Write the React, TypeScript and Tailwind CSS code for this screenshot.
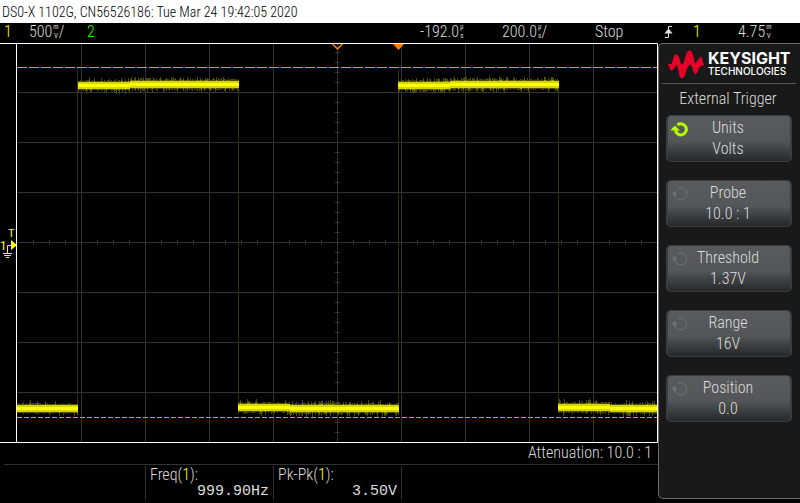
import React from "react";

type SoftKey = {
  label: string;
  value: string;
  active?: boolean;
};

type Segment = {
  x1: number;
  x2: number;
  y: number;
  settle: number;
};

const softKeys: SoftKey[] = [
  { label: "Units", value: "Volts", active: true },
  { label: "Probe", value: "10.0 : 1" },
  { label: "Threshold", value: "1.37V" },
  { label: "Range", value: "16V" },
  { label: "Position", value: "0.0" },
];

const measurements = [
  { name: "Freq", channel: 1, value: "999.90Hz" },
  { name: "Pk-Pk", channel: 1, value: "3.50V" },
];

const columns = [81, 145, 209, 273, 337, 401, 465, 529, 593];
const rows = [49, 99, 149, 199, 249, 299, 349];
const edges = [
  { x: 77, top: 25 },
  { x: 238, top: 44 },
  { x: 398, top: 27 },
  { x: 558, top: 44 },
];

// settle is how far the level drifts from its start to its end
const segments: Segment[] = [
  { x1: 17, x2: 78, y: 365, settle: 0 },
  { x1: 78, x2: 239, y: 41, settle: 1.4 },
  { x1: 238, x2: 399, y: 365, settle: -1.4 },
  { x1: 398, x2: 559, y: 41, settle: 1.4 },
  { x1: 558, x2: 657, y: 365, settle: -1.4 },
];

const noise = (x: number) => {
  const n = Math.sin(x * 12.9898) * 43758.5453;
  return n - Math.floor(n);
};

const levelAt = (s: Segment, x: number) =>
  Math.round(s.y + s.settle * Math.max(0, 1 - (x - s.x1) / 80));

const noisePath = (s: Segment, base: number, spike: number) => {
  let d = "";
  for (let x = s.x1; x < s.x2; x++) {
    const y = levelAt(s, x);
    const up = base + Math.floor(noise(x) * noise(x + 7) * spike);
    const down = base + Math.floor(noise(x + 31) * noise(x + 3) * spike);
    d += `M${x + 0.5} ${y - up}V${y + down + 1}`;
  }
  return d;
};

const corePath = (s: Segment) => {
  let d = "";
  for (let x = s.x1; x < s.x2; x++) {
    d += `M${x + 0.5} ${levelAt(s, x) - 1}v3`;
  }
  return d;
};

const Unit = ({ top, bottom }: { top: string; bottom: string }) => (
  <span className="ml-px inline-flex flex-col items-center text-[7px] font-normal leading-[9px]">
    <span>{top}</span>
    <span>{bottom}</span>
  </span>
);

const EdgeIcon = () => (
  <svg width="9" height="12" viewBox="0 0 9 12" fill="none" stroke="#e0e0e0" aria-hidden="true">
    <path d="M1 11.5h3.5V.5H8" />
    <path d="M4.500 2.500L.5 7.500h8z" fill="#e0e0e0" stroke="none" />
  </svg>
);

const Logo = () => (
  <svg width="36" height="28" viewBox="0 0 36 28" fill="#e90029" className="shrink-0" aria-hidden="true">
    <path d="M0 14H3.500L6 6Q8.300 2 11 7L13 14Q14.500 16 16 12L18.500 3Q21.500-2.500 24.500 3L26.500 12Q27.500 15 28.500 12L30.500 9Q32.500 5 34.500 9L35 13L36 14V15.500H33.500Q31.500 16 30.500 19L29.500 22Q27.500 26 25.500 22L24 17Q22 12 20.500 16L18.500 20L17 25Q14 31 11.500 26L10 19Q8.500 13 7.500 16L5.500 19Q3 23 1.500 18Z" />
  </svg>
);

const KnobIcon = ({ active }: { active?: boolean }) =>
  active ? (
    <svg width="18" height="15" viewBox="0 0 18 15" fill="none" className="text-[#b4ff00]" aria-hidden="true">
      <path d="M6.500 3A5.500 5.500 0 1 1 5 10" stroke="currentColor" strokeWidth="3" />
      <path d="M4 3.500L9 8.500H6.500V11H3.500V8.500H0V7.500Z" fill="currentColor" />
    </svg>
  ) : (
    <svg width="18" height="15" viewBox="0 0 18 15" fill="none" className="text-[#717476]" aria-hidden="true">
      <path d="M7 1.500A6 6 0 1 1 4.500 10" stroke="currentColor" />
      <path d="M3.500 4L6.500 7.500H4.500V10H3V7.500H.5Z" fill="currentColor" />
    </svg>
  );

const Scope = () => (
  <svg viewBox="0 0 658 400" className="block h-auto w-full" role="img" aria-label="Channel 1 square wave">
    <g stroke="#333333">
      {columns.map((x) => (
        <path key={x} d={`M${x + 0.5} 1V399`} />
      ))}
      {rows.map((y) => (
        <path key={y} d={`M17 ${y + 0.5}H657`} />
      ))}
      {Array.from({ length: 39 }, (_, i) => (
        <path key={i} d={`M335 ${i * 10 + 9.5}h5`} />
      ))}
      {Array.from({ length: 39 }, (_, i) => (
        <path key={i} d={`M${i * 16 + 33.5} 197v5`} />
      ))}
    </g>

    <g stroke="#333300">
      {edges.map((edge) => (
        <path key={edge.x} d={`M${edge.x + 0.5} ${edge.top}V366`} />
      ))}
    </g>
    {segments.map((s) => (
      <g key={s.x1}>
        <path d={noisePath(s, 4, 5)} stroke="#4d4d00" />
        <path d={noisePath(s, 3, 2)} stroke="#999900" />
        <path d={noisePath(s, 3, 1)} stroke="#d5d500" />
        <path d={corePath(s)} stroke="#ffff00" />
      </g>
    ))}

    <path d="M17 24.5H657" stroke="#ff8c1a" strokeDasharray="10 2" />
    <path d="M17 374.5H657" stroke="#ff8c1a" strokeDasharray="5 2" />

    <path d="M0 .5H657.500V399.500H0M16.500 0V399" fill="none" stroke="#ffffff" />
    <path d="M332.500 1L337.500 6L342.500 1" fill="none" stroke="#ff8000" strokeWidth="1.5" />
    <path d="M393 1H404L398.500 7Z" fill="#ff8000" />

    <text x="8" y="194" fill="#ffff00" className="font-['Roboto'] text-[11px] font-normal">
      T
    </text>
    <text x="0" y="207" fill="#ffff00" className="font-['Roboto_Condensed'] text-[13px] font-normal">
      1
    </text>
    <path d="M11 197L17 202L11 207Z" fill="#ffff00" />
    <path d="M11 202.500H7.500V210M3 210.500H12M4 212.500H11M6 214.500H9" fill="none" stroke="#ffff00" />
  </svg>
);

const StatusBar = () => (
  <header className="flex h-5 items-center pb-0.5">
    <div className="flex min-w-0 flex-1 items-center">
      <span className="w-[29px] pl-1 text-[#ffff00]">1</span>
      <span className="flex w-[58px] items-center">
        500
        <Unit top="m" bottom="V" />/
      </span>
      <span className="flex-1 text-[#33ff00]">2</span>
      <span className="flex w-[82px] items-center">
        -192.0
        <Unit top="µ" bottom="s" />
      </span>
      <span className="flex w-[93px] items-center">
        200.0
        <Unit top="µ" bottom="s" />/
      </span>
      <span className="w-[63px]">Stop</span>
    </div>
    <div className="flex w-[142px] items-center pl-1.5">
      <EdgeIcon />
      <span className="w-[65px] pl-5 text-[#ffff00]">1</span>
      <span className="flex items-center">
        4.75
        <Unit top="m" bottom="V" />
      </span>
    </div>
  </header>
);

const SoftKeyButton = ({ label, value, active }: SoftKey) => (
  <button
    type="button"
    className="relative h-[47px] w-full rounded-[5px] border border-x-2 border-[#3a3e41] bg-linear-to-b from-[#585b5d] from-0% via-[#54575a] via-55% to-[#25292c] pb-0.5 pr-0.5 text-center leading-[21px]"
  >
    <span className="absolute left-[3px] top-1.5">
      <KnobIcon active={active} />
    </span>
    <span className="block">{label}</span>
    <span className="block">{value}</span>
  </button>
);

const Menu = () => (
  <aside className="mb-1 w-[142px] shrink-0 rounded-l-[5px] border border-r-0 border-[#6b6b6b] bg-[#191919] pl-[7px] pr-2">
    <div className="-mx-1 flex h-10 items-center gap-1 border-b border-[#555555] pl-1.5">
      <Logo />
      <div className="whitespace-nowrap font-['Inter',sans-serif] text-white">
        <div className="text-[16px] font-bold leading-[14px]">KEYSIGHT</div>
        <div className="text-[10px] font-medium leading-[12px]">TECHNOLOGIES</div>
      </div>
    </div>
    <h1 className="flex h-[31px] items-center justify-center pb-0.5 pr-0.5">External Trigger</h1>
    <div className="flex flex-col gap-[18px]">
      {softKeys.map((key) => (
        <SoftKeyButton key={key.label} {...key} />
      ))}
    </div>
  </aside>
);

const App = () => {
  return (
    <div className="bg-black font-['Roboto_Condensed','Roboto',sans-serif] text-[16px] font-light leading-5 text-[#dddddd]">
      <div className="h-[23px] whitespace-nowrap bg-white pl-0.5 text-[14px] leading-[24px] text-black">
        DS0-X 1102G, CN56526186: Tue Mar 24 19:42:05 2020
      </div>
      <StatusBar />
      <main className="flex">
        <div className="min-w-0 flex-1">
          <Scope />
          <div className="ml-1 h-[22px] border-b border-[#2e3234] pr-1.5 text-right">
            Attenuation: 10.0 : 1
          </div>
          <div className="flex h-[38px] pl-[145px] pt-px">
            {measurements.map((m) => (
              <div key={m.name} className="h-[34px] w-32 border-l border-[#2e3234] px-1">
                <div className="leading-[17px]">
                  {m.name}(<span className="text-[#ffff00]">{m.channel}</span>):
                </div>
                <div className="text-right font-['Liberation_Mono',monospace] text-[15px] leading-[17px]">
                  {m.value}
                </div>
              </div>
            ))}
            <div className="h-[34px] border-l border-[#2e3234]" />
          </div>
        </div>
        <Menu />
      </main>
    </div>
  );
};

export default App;
